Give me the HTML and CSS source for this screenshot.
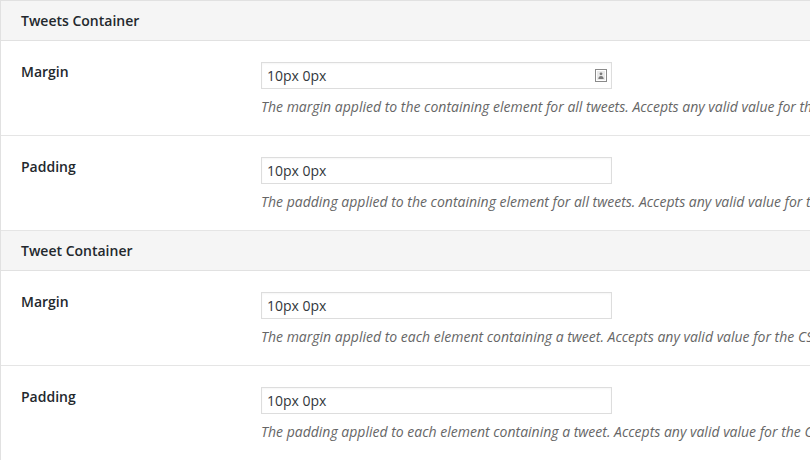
FILE: index.html
```html
<!DOCTYPE html>
<html>
<head>
<meta charset="utf-8">
<link rel="stylesheet" href="styles.css">
</head>
<body>
<div class="panel">
  <div class="section-head">Tweets Container</div>
  <div class="row">
    <div class="label">Margin</div>
    <div class="field">
      <div class="input has-icon">
        <span class="value">10px 0px</span>
        <svg class="pm-icon" width="12" height="13" viewBox="0 0 12 13">
          <rect x="0.5" y="0.5" width="11" height="12" fill="#fff" stroke="#8a8a8a"/>
          <rect x="2" y="2" width="8" height="9" fill="#e9e9e9"/>
          <circle cx="6" cy="4.8" r="1.4" fill="#7a7a7a"/>
          <path d="M3.3 10 Q3.5 7 6 7 Q8.5 7 8.7 10 Z" fill="#7a7a7a"/>
        </svg>
      </div>
      <p class="desc">The margin applied to the containing element for all tweets. Accepts any valid value for the CSS margin property.</p>
    </div>
  </div>
  <div class="row">
    <div class="label">Padding</div>
    <div class="field">
      <div class="input"><span class="value">10px 0px</span></div>
      <p class="desc">The padding applied to the containing element for all tweets. Accepts any valid value for the CSS padding property.</p>
    </div>
  </div>
  <div class="section-head">Tweet Container</div>
  <div class="row">
    <div class="label">Margin</div>
    <div class="field">
      <div class="input"><span class="value">10px 0px</span></div>
      <p class="desc">The margin applied to each element containing a tweet. Accepts any valid value for the CSS margin property.</p>
    </div>
  </div>
  <div class="row">
    <div class="label">Padding</div>
    <div class="field">
      <div class="input"><span class="value">10px 0px</span></div>
      <p class="desc">The padding applied to each element containing a tweet. Accepts any valid value for the CSS padding property.</p>
    </div>
  </div>
</div>
</body>
</html>
```
FILE: styles.css
```css
html, body {
  margin: 0;
  padding: 0;
  background: #fff;
  overflow: hidden;
}
body {
  font-family: "Open Sans", "Noto Sans", sans-serif;
  color: #23282d;
  width: 810px;
  height: 460px;
}
.panel {
  border-left: 1px solid #e1e1e1;
  border-top: 1px solid #e1e1e1;
  height: 460px;
  box-sizing: border-box;
}
.section-head {
  height: 39px;
  line-height: 39px;
  background: #f5f5f5;
  border-bottom: 1px solid #e1e1e1;
  padding-left: 20px;
  font-size: 14px;
  font-weight: 600;
  color: #23282d;
}
.row {
  display: grid;
  grid-template-columns: 240px 1fr;
  padding: 21px 0 18px 20px;
  border-bottom: 1px solid #e5e5e5;
  height: 55px;
}
.label {
  font-size: 14px;
  font-weight: 600;
  line-height: 20px;
  color: #23282d;
}
.field {
  min-width: 0;
  overflow: hidden;
}
.input {
  box-sizing: border-box;
  width: 351px;
  height: 27px;
  border: 1px solid #dddddd;
  box-shadow: inset 0 1px 2px rgba(0,0,0,0.04);
  display: flex;
  align-items: center;
  justify-content: space-between;
  padding: 0 4px 0 5px;
  font-size: 14px;
  color: #32373c;
}
.pm-icon {
  display: block;
}
.desc {
  margin: 8px 0 0;
  font-size: 14px;
  line-height: 20px;
  font-style: italic;
  color: #666;
  white-space: nowrap;
}
```
